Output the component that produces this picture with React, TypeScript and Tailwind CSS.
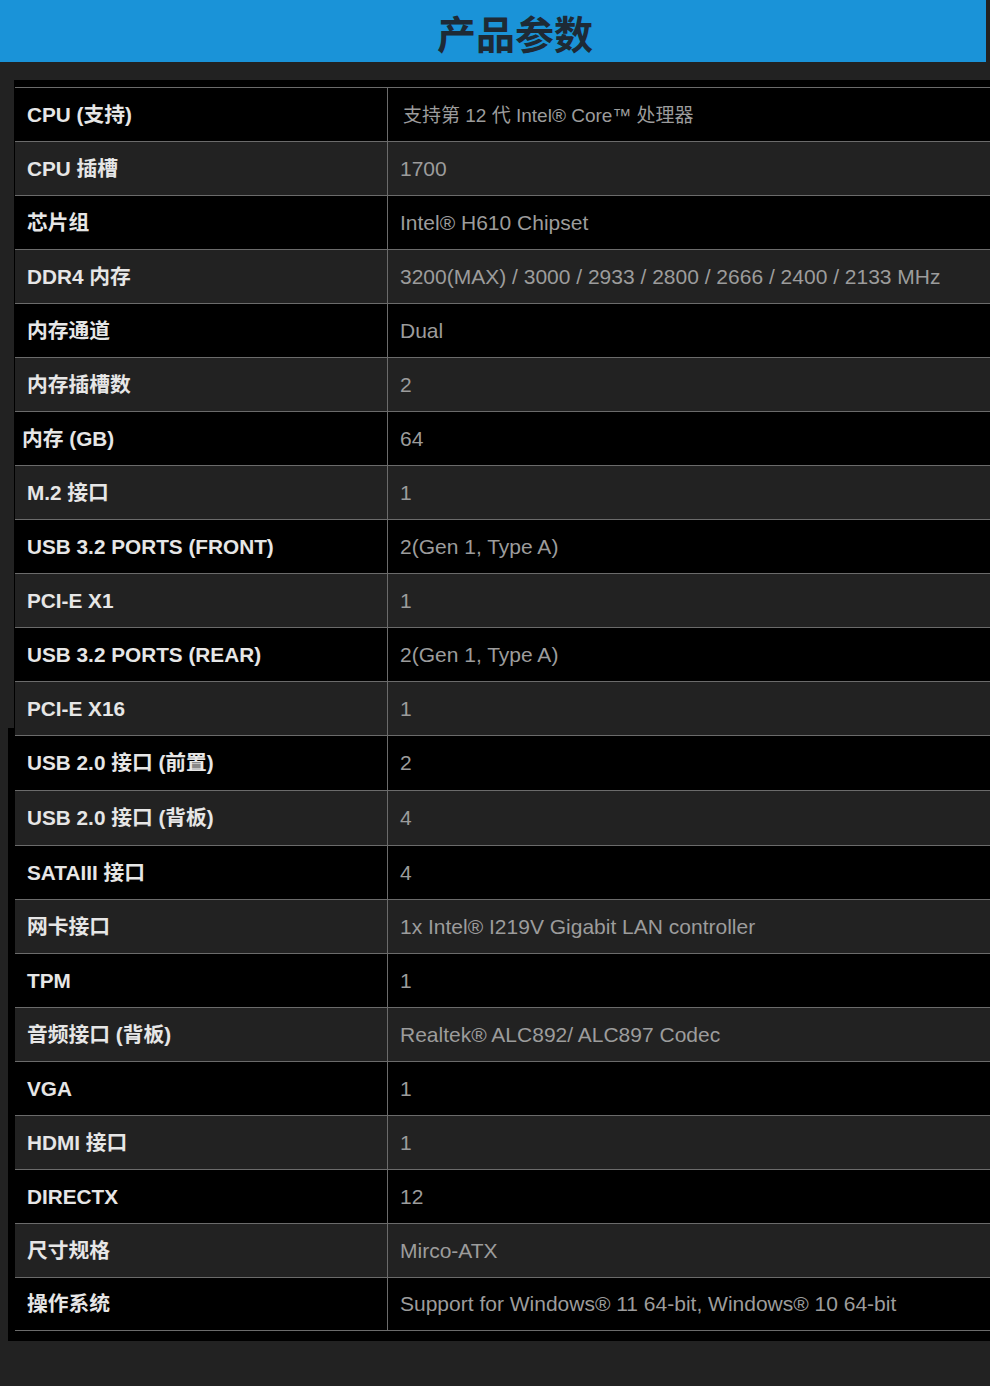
const rows: { k: string; v: string; h?: string; kx?: string; vx?: string }[] = [
  { k: "CPU (支持)", v: "支持第 12 代 Intel® Core™ 处理器", vx: "pl-[15px] pt-[3px] text-[19px]" },
  { k: "CPU 插槽", v: "1700" },
  { k: "芯片组", v: "Intel® H610 Chipset" },
  { k: "DDR4 内存", v: "3200(MAX) / 3000 / 2933 / 2800 / 2666 / 2400 / 2133 MHz" },
  { k: "内存通道", v: "Dual" },
  { k: "内存插槽数", v: "2" },
  { k: "内存 (GB)", v: "64", kx: "pl-[7px]" },
  { k: "M.2 接口", v: "1" },
  { k: "USB 3.2 PORTS (FRONT)", v: "2(Gen 1, Type A)" },
  { k: "PCI-E X1", v: "1" },
  { k: "USB 3.2 PORTS (REAR)", v: "2(Gen 1, Type A)" },
  { k: "PCI-E X16", v: "1" },
  { k: "USB 2.0 接口 (前置)", v: "2", h: "h-[55px]" },
  { k: "USB 2.0 接口 (背板)", v: "4", h: "h-[55px]" },
  { k: "SATAIII 接口", v: "4" },
  { k: "网卡接口", v: "1x Intel® I219V Gigabit LAN controller" },
  { k: "TPM", v: "1" },
  { k: "音频接口 (背板)", v: "Realtek® ALC892/ ALC897 Codec" },
  { k: "VGA", v: "1" },
  { k: "HDMI 接口", v: "1" },
  { k: "DIRECTX", v: "12" },
  { k: "尺寸规格", v: "Mirco-ATX" },
  { k: "操作系统", v: "Support for Windows® 11 64-bit, Windows® 10 64-bit" },
]

function SpecRow({ k, v, h, kx, vx, i, last }: (typeof rows)[number] & { i: number; last: boolean }) {
  return (
    <div
      className={`flex border-t border-[#6b6b6b] ${h ?? "h-[54px]"} ${last ? "border-b" : ""} ${
        i % 2 === 0 ? "bg-black" : "bg-[#222]"
      }`}
    >
      <div
        className={`flex w-[372px] shrink-0 items-center ${kx ?? "pl-[12px]"} text-[20.75px] font-bold text-[#e6e6e6]`}
      >
        {k}
      </div>
      <div
        className={`flex flex-1 items-center border-l border-[#6b6b6b] ${vx ?? "pl-[12px] text-[21px]"} text-[#9c9c9c]`}
      >
        {v}
      </div>
    </div>
  )
}

export default function App() {
  return (
    <div className="min-h-[1386px] bg-[#222] font-['Liberation_Sans','Noto_Sans_CJK_SC',sans-serif]">
      <div className="flex h-[62px] w-[986px] items-center justify-center bg-[#1a93d8]">
        <h1 className="pl-[44px] pt-[10px] text-[39px] font-bold text-[#1e2a35]">产品参数</h1>
      </div>
      <div className="mt-[18px] flex">
        <div className="ml-[8px] flex w-[6px] flex-col">
          <div className="h-[648px] bg-[#222]" />
          <div className="flex-1 bg-black" />
        </div>
        <div className="flex-1 bg-black pb-[10px] pl-[1px] pt-[7px]">
          {rows.map((r, i) => (
            <SpecRow key={r.k} {...r} i={i} last={i === rows.length - 1} />
          ))}
        </div>
      </div>
    </div>
  )
}
